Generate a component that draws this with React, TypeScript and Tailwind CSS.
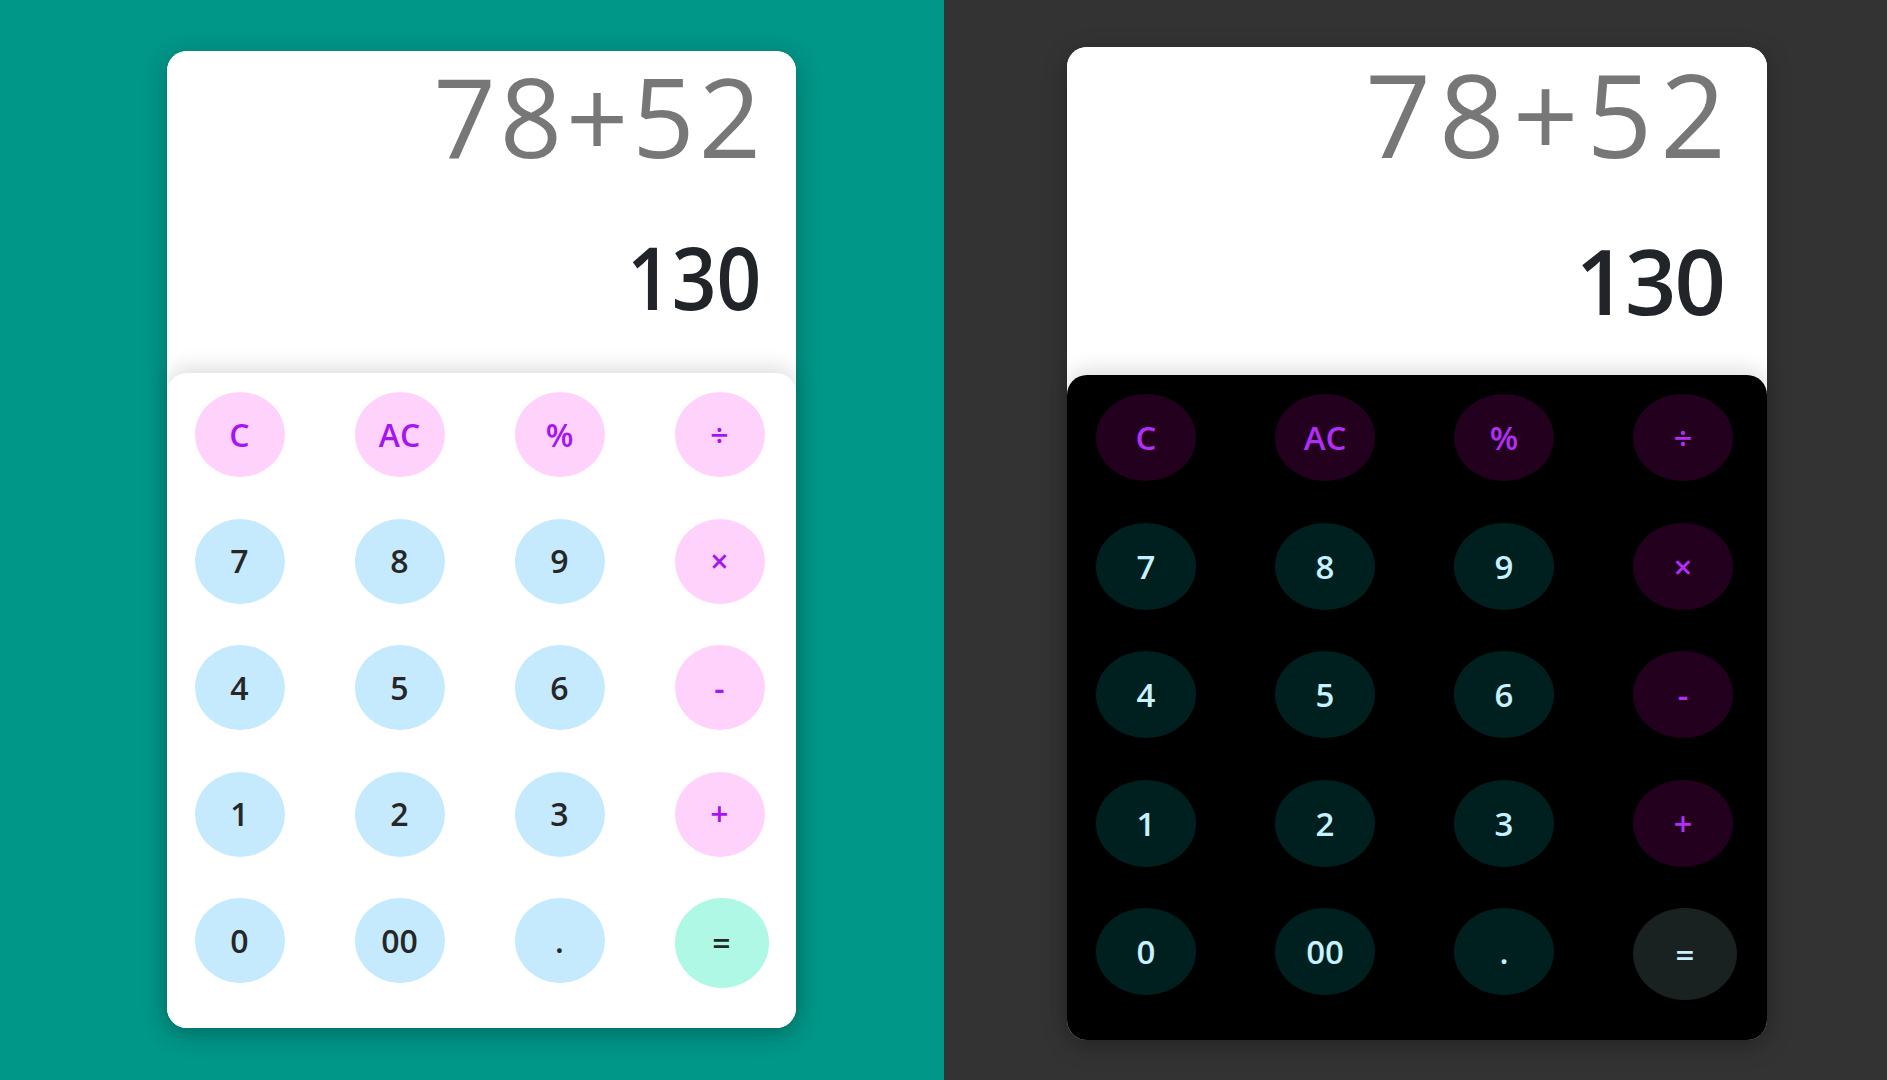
import React from "react";

type Key = { label: string; kind: "op" | "num" | "eq" };

const keys: Key[] = [
  { label: "C", kind: "op" },
  { label: "AC", kind: "op" },
  { label: "%", kind: "op" },
  { label: "÷", kind: "op" },
  { label: "7", kind: "num" },
  { label: "8", kind: "num" },
  { label: "9", kind: "num" },
  { label: "×", kind: "op" },
  { label: "4", kind: "num" },
  { label: "5", kind: "num" },
  { label: "6", kind: "num" },
  { label: "-", kind: "op" },
  { label: "1", kind: "num" },
  { label: "2", kind: "num" },
  { label: "3", kind: "num" },
  { label: "+", kind: "op" },
  { label: "0", kind: "num" },
  { label: "00", kind: "num" },
  { label: ".", kind: "num" },
  { label: "=", kind: "eq" },
];

type Theme = {
  panel: string;
  card: string;
  display: string;
  expr: string;
  result: string;
  keypad: string;
  btn: string;
  eq: string;
  op: string;
  num: string;
  eqColor: string;
};

const light: Theme = {
  panel: "bg-[#009688] pl-[167px] pt-[51px]",
  card: "w-[629px] rounded-[20px] bg-white shadow-[0_6px_24px_rgba(0,0,0,0.25)]",
  display: "h-[322px] pt-[10px] pr-[31px] flex flex-col items-end bg-white rounded-t-[20px]",
  expr: "-mt-[10px] text-[109px] leading-[1.2] font-normal tracking-[4px] text-[#777777] whitespace-nowrap",
  result:
    "mt-[42px] mr-[4px] text-[87px] leading-[1.2] font-semibold scale-x-90 origin-right text-[#212529] whitespace-nowrap",
  keypad:
    "relative grid grid-cols-4 gap-x-[70px] gap-y-[41.5px] pt-[19px] pb-[44.5px] pl-[27.5px] pr-[31.5px] bg-white rounded-[20px] shadow-[0_-6px_20px_rgba(0,0,0,0.13)]",
  btn: "w-[90px] h-[85px] text-[32px]",
  eq: "w-[94px] h-[90px] -mb-[5px] text-[32px]",
  op: "bg-[#ffd2fc] text-[#a515f0]",
  num: "bg-[#c5e9fd] text-[#262626]",
  eqColor: "bg-[#aef8e5] text-[#262626]",
};

const dark: Theme = {
  panel: "bg-[#333333] pl-[123.5px] pt-[47px]",
  card: "w-[700px] rounded-[20px] bg-white shadow-[0_6px_24px_rgba(0,0,0,0.25)]",
  display: "h-[328px] pt-[10px] pr-[33px] flex flex-col items-end bg-white rounded-t-[20px]",
  expr: "-mt-[12px] text-[115px] leading-[1.2] font-normal tracking-[8px] text-[#777777] whitespace-nowrap",
  result:
    "mt-[43px] mr-[10px] text-[90px] leading-[1.2] font-semibold tracking-[-2px] text-[#212529] whitespace-nowrap",
  keypad:
    "relative grid grid-cols-4 gap-x-[79px] gap-y-[41.5px] pt-[19px] pb-[45px] pl-[29px] pr-[34px] bg-black rounded-[20px] shadow-[0_-6px_20px_rgba(0,0,0,0.13)]",
  btn: "w-[100px] h-[87px] text-[33px]",
  eq: "w-[104px] h-[92px] -mb-[5px] text-[33px]",
  op: "bg-[#23001e] text-[#b22ef5]",
  num: "bg-[#002020] text-[#c8f1ff]",
  eqColor: "bg-[#192121] text-[#c8f1ff]",
};

function Calculator({ t }: { t: Theme }) {
  return (
    <div className={t.panel}>
      <div className={t.card}>
        <div className={t.display}>
          <div className={t.expr}>78+52</div>
          <div className={t.result}>130</div>
        </div>
        <div className={t.keypad}>
          {keys.map((k) => {
            const color = k.kind === "op" ? t.op : k.kind === "num" ? t.num : t.eqColor;
            const size = k.kind === "eq" ? t.eq : t.btn;
            return (
              <div
                key={k.label}
                className={`${size} ${color} rounded-[50%] flex items-center justify-center font-semibold leading-none`}
              >
                {k.label}
              </div>
            );
          })}
        </div>
      </div>
    </div>
  );
}

export default function App() {
  return (
    <div className="grid grid-cols-2 w-full h-[1080px] overflow-hidden font-['Open_Sans','Noto_Sans',sans-serif]">
      <Calculator t={light} />
      <Calculator t={dark} />
    </div>
  );
}
